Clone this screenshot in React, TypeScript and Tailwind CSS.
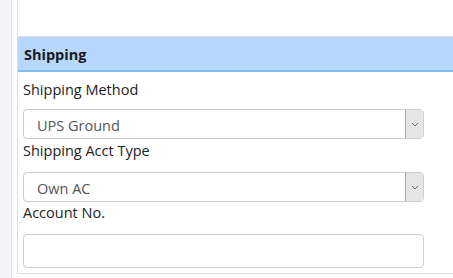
import React from 'react';

const font = { fontFamily: '"Open Sans", "Noto Sans", sans-serif' };

const Chevron: React.FC = () => (
  <svg width="8" height="5" viewBox="0 0 8 5" fill="none">
    <path d="M1 1 L4 4 L7 1" stroke="#666" strokeWidth="1" />
  </svg>
);

const SelectBox: React.FC<{ value: string }> = ({ value }) => (
  <div className="flex h-[30px] w-[401px] items-stretch overflow-hidden rounded-[4px] border border-[#cfcfcf] bg-white">
    <div className="flex flex-1 items-center pl-[13px] pt-[3px] text-[14.5px] text-[#555]">{value}</div>
    <div className="flex w-[18px] items-center justify-center border-l border-[#a9a9a9] bg-[#e5e5e5]">
      <Chevron />
    </div>
  </div>
);

const Label: React.FC<{ text: string }> = ({ text }) => (
  <div className="text-[14.5px] leading-[20px] text-[#222]">{text}</div>
);

export default function App() {
  return (
    <div className="flex h-[278px] w-[453px] overflow-hidden bg-[#f3f4f8]" style={font}>
      <div className="w-[11px] shrink-0" />
      <div className="flex flex-1 border-l border-[#e2e4ea] bg-white pl-[5px]">
        <div className="flex h-[274px] flex-1 flex-col border-b border-l border-[#dedede]">
          <div className="h-[37px] border-b border-[#dedede]" />
          <div className="flex h-[35px] items-center border-b-2 border-[#86bbee] bg-[#b7d8fc] pl-[6px] pt-[2px] text-[14.5px] font-bold text-[#1a1a1a]">
            Shipping
          </div>
          <div className="flex flex-col pl-[5px]">
            <div className="mt-[8px]">
              <Label text="Shipping Method" />
            </div>
            <div className="mt-[9px]">
              <SelectBox value="UPS Ground" />
            </div>
            <div className="mt-[2px]">
              <Label text="Shipping Acct Type" />
            </div>
            <div className="mt-[11px]">
              <SelectBox value="Own AC" />
            </div>
            <div className="mt-[1px]">
              <Label text="Account No." />
            </div>
            <div className="mt-[11px] h-[34px] w-[401px] rounded-[4px] border border-[#d0d0d0] bg-white" />
          </div>
        </div>
      </div>
    </div>
  );
}
